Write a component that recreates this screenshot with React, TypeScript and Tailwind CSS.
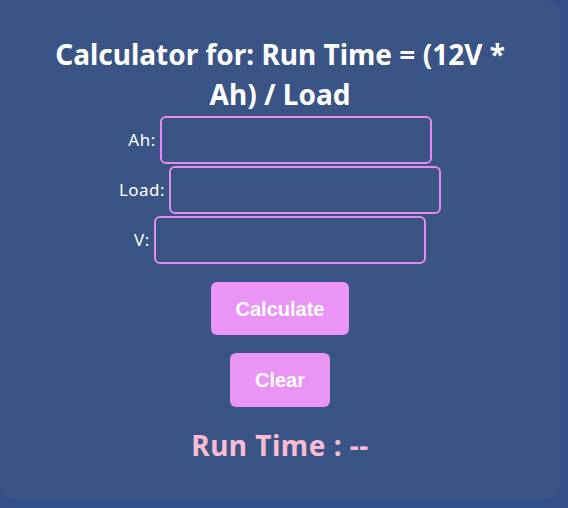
import { useState } from 'react'

const fields = [
  { key: 'ah', label: 'Ah:' },
  { key: 'load', label: 'Load:' },
  { key: 'v', label: 'V:' },
]

export default function App() {
  const [values, setValues] = useState<Record<string, string>>({ ah: '', load: '', v: '' })
  const [result, setResult] = useState('--')

  const calculate = () => {
    const ah = parseFloat(values.ah)
    const load = parseFloat(values.load)
    const v = parseFloat(values.v) || 12
    if (!ah || !load) return setResult('--')
    setResult(((v * ah) / load).toFixed(2) + ' h')
  }

  const clear = () => {
    setValues({ ah: '', load: '', v: '' })
    setResult('--')
  }

  return (
    <div className="min-h-screen w-[568px] h-[508px] bg-[#35518a] overflow-hidden font-['Noto_Sans',sans-serif]">
      <div className="w-[560px] h-[500px] rounded-r-2xl rounded-bl-2xl bg-[#395485] shadow-[0_0_4px_rgba(0,0,0,0.08)] flex flex-col items-center pt-[34px]">
        {/* Title */}
        <h1 className="w-[470px] text-center text-white font-bold text-[28px] leading-[40px]">
          Calculator for: Run Time = (12V * Ah) / Load
        </h1>

        {/* Inputs */}
        <div className="mt-[2px] flex flex-col items-center gap-[2px]">
          {fields.map((f) => (
            <div key={f.key} className="flex items-center gap-[4px]">
              <label className="text-white text-[17px] tracking-[0.5px]">{f.label}</label>
              <input
                value={values[f.key]}
                onChange={(e) => setValues({ ...values, [f.key]: e.target.value })}
                className="w-[272px] h-[48px] rounded-md border-2 border-[#e48cf0] bg-transparent text-white px-2 outline-none"
              />
            </div>
          ))}
        </div>

        {/* Buttons */}
        <div className="mt-[18px] flex flex-col items-center gap-[18px] font-['Liberation_Sans',Arial,sans-serif]">
          <button
            onClick={calculate}
            className="px-[25px] h-[53px] rounded-md bg-[#ea94f5] text-white font-bold text-[20px]"
          >
            Calculate
          </button>
          <button
            onClick={clear}
            className="px-[25px] h-[54px] rounded-md bg-[#ea94f5] text-white font-bold text-[20px]"
          >
            Clear
          </button>
        </div>

        {/* Result */}
        <p className="mt-[20px] text-[#f9bcd5] font-bold text-[28px] leading-[36px] tracking-[0.5px]">
          Run Time : {result}
        </p>
      </div>
    </div>
  )
}
